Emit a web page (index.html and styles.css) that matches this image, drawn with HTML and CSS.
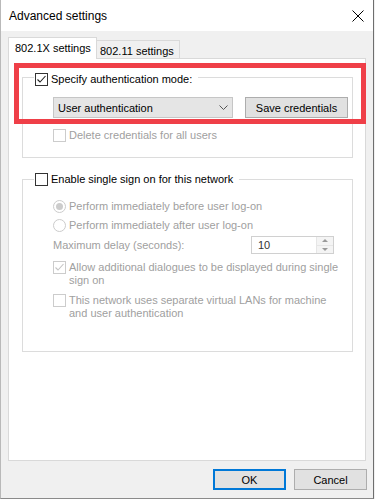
FILE: index.html
```html
<!DOCTYPE html>
<html lang="en">
<head>
    <meta charset="UTF-8">
    <title>Advanced settings</title>
    <link rel="stylesheet" href="styles.css">
</head>
<body>
    <div class="window">
        <div class="titlebar">
            <span class="title">Advanced settings</span>
            <svg class="close" width="12" height="12" viewBox="0 0 12 12">
                <path d="M0.5 0.5 L11.5 11.5 M11.5 0.5 L0.5 11.5" stroke="#000" stroke-width="1" fill="none"/>
            </svg>
        </div>

        <div class="content">
            <div class="tabs">
                <div class="tab active">802.1X settings</div>
                <div class="tab">802.11 settings</div>
            </div>

            <div class="panel">
                <div class="highlight"></div>

                <div class="group group-auth">
                    <label class="group-head">
                        <span class="check on">
                            <svg width="11" height="11" viewBox="0 0 11 11"><path d="M1.5 5.5 L4 8 L9.5 2" stroke="#222" stroke-width="1.1" fill="none"/></svg>
                        </span>
                        Specify authentication mode:
                    </label>
                    <div class="mode-row">
                        <div class="select">
                            <span>User authentication</span>
                            <svg width="9" height="5" viewBox="0 0 9 5"><path d="M0.5 0.5 L4.5 4.5 L8.5 0.5" stroke="#555" stroke-width="1" fill="none"/></svg>
                        </div>
                        <button class="btn save-btn">Save credentials</button>
                    </div>
                    <label class="option disabled delete-row">
                        <span class="check"></span>
                        Delete credentials for all users
                    </label>
                </div>

                <div class="group group-sso">
                    <label class="group-head">
                        <span class="check dark"></span>
                        Enable single sign on for this network
                    </label>
                    <label class="option disabled radio-first">
                        <span class="radio on"></span>
                        Perform immediately before user log-on
                    </label>
                    <label class="option disabled radio-second">
                        <span class="radio"></span>
                        Perform immediately after user log-on
                    </label>
                    <div class="delay-row">
                        <span class="delay-label disabled">Maximum delay (seconds):</span>
                        <div class="spin">
                            <span class="spin-value">10</span>
                            <div class="spin-arrows">
                                <span class="arrow up"></span>
                                <span class="arrow down"></span>
                            </div>
                        </div>
                    </div>
                    <label class="option disabled multi allow-row">
                        <span class="check">
                            <svg width="11" height="11" viewBox="0 0 11 11"><path d="M1.5 5.5 L4 8 L9.5 2" stroke="#c4c4c4" stroke-width="1.1" fill="none"/></svg>
                        </span>
                        <span>Allow additional dialogues to be displayed during single sign on</span>
                    </label>
                    <label class="option disabled multi vlan-row">
                        <span class="check"></span>
                        <span>This network uses separate virtual LANs for machine and user authentication</span>
                    </label>
                </div>
            </div>

            <div class="actions">
                <button class="btn primary">OK</button>
                <button class="btn">Cancel</button>
            </div>
        </div>
    </div>
</body>
</html>
```

FILE: styles.css
```css
* {
    margin: 0;
    padding: 0;
    box-sizing: border-box;
    font-family: 'Liberation Sans', Arial, sans-serif;
}

body {
    background-color: #f0f0f0;
    width: 375px;
    height: 499px;
    overflow: hidden;
    font-size: 11px;
    color: #000;
}

.window {
    width: 374px;
    height: 499px;
    background: #f0f0f0;
    border-left: 1px solid #b9b9b9;
    border-right: 1px solid #6e6e6e;
    border-bottom: 1px solid #8a8a8a;
}

.titlebar {
    height: 31px;
    background: #fff;
    display: flex;
    align-items: center;
    padding-left: 8px;
}

.title {
    font-size: 12px;
}

.close {
    margin-left: auto;
    margin-right: 9px;
}

.content {
    padding: 6px 7px 0 7px;
}

/* tabs */

.tabs {
    display: flex;
    align-items: flex-end;
    height: 21px;
}

.tab {
    height: 18px;
    width: 83px;
    display: flex;
    align-items: center;
    padding: 2px 0 0 3px;
    border: 1px solid #d9d9d9;
    border-bottom: none;
    border-left: none;
    background: #f0f0f0;
}

.tab.active {
    height: 22px;
    width: 89px;
    padding: 0 0 1px 6px;
    border-left: 1px solid #d9d9d9;
    background: #fff;
    margin-bottom: -1px;
    position: relative;
    z-index: 1;
}

.panel {
    position: relative;
    height: 403px;
    background: #fff;
    border: 1px solid #d9d9d9;
    padding: 18px 12px 0 13px;
}

.highlight {
    position: absolute;
    left: 5px;
    top: 4px;
    width: 352px;
    height: 61px;
    border: 5px solid #ef3f48;
    z-index: 2;
}

/* group boxes */

.group {
    border: 1px solid #dcdcdc;
}

.group-head {
    display: flex;
    align-items: center;
    gap: 3px;
    width: fit-content;
    line-height: 13px;
    background: #fff;
    padding: 0 6px 0 1px;
    margin-left: 11px;
}

.group-auth {
    margin-top: 0;
    padding-bottom: 15px;
}

.group-auth .group-head {
    margin-top: -5px;
}

.group-sso {
    margin-top: 21px;
    padding-bottom: 31px;
}

.group-sso .group-head {
    margin-top: -7px;
}

.mode-row {
    display: flex;
    gap: 12px;
    margin: 11px 0 0 30px;
}

.select {
    width: 180px;
    height: 21px;
    display: flex;
    align-items: center;
    justify-content: space-between;
    padding: 0 4px 0 4px;
    background: #e5e5e5;
    border: 1px solid #c6c6c6;
}

.btn {
    height: 21px;
    width: 73px;
    background: #e1e1e1;
    border: 1px solid #adadad;
    font-size: 11px;
    color: #000;
}

.save-btn {
    width: 103px;
}

.btn.primary {
    border: 2px solid #0078d7;
}

/* options */

.option {
    display: flex;
    align-items: center;
    gap: 3px;
    line-height: 13px;
    margin-left: 30px;
}

.option.multi {
    align-items: flex-start;
    padding-right: 11px;
}

.disabled {
    color: #a0a0a0;
}

.delete-row {
    margin-top: 11px;
}

.radio-first {
    margin-top: 14px;
}

.radio-second {
    margin-top: 6px;
}

.allow-row {
    margin-top: 7px;
}

.vlan-row {
    margin-top: 7px;
}

.check {
    width: 13px;
    height: 13px;
    flex-shrink: 0;
    border: 1px solid #cccccc;
    background: #fff;
    display: flex;
    align-items: center;
    justify-content: center;
}

.check.on,
.check.dark {
    border-color: #333;
}

.radio {
    width: 13px;
    height: 13px;
    flex-shrink: 0;
    border: 1px solid #cccccc;
    border-radius: 50%;
    display: flex;
    align-items: center;
    justify-content: center;
}

.radio.on::after {
    content: "";
    width: 7px;
    height: 7px;
    border-radius: 50%;
    background: #cccccc;
}

/* delay spinner */

.delay-row {
    display: flex;
    align-items: center;
    justify-content: space-between;
    margin: 4px 18px 0 30px;
}

.spin {
    width: 83px;
    height: 18px;
    display: flex;
    border: 1px solid #d0d0d0;
}

.spin-value {
    flex: 1;
    padding: 2px 0 0 6px;
    color: #333;
}

.spin-arrows {
    width: 17px;
    display: flex;
    flex-direction: column;
    border-left: 1px solid #e6e6e6;
}

.arrow {
    flex: 1;
    display: flex;
    align-items: center;
    justify-content: center;
    background: #f4f4f4;
}

.arrow.up {
    border-bottom: 1px solid #e6e6e6;
}

.arrow.up::after {
    content: "";
    border-left: 3px solid transparent;
    border-right: 3px solid transparent;
    border-bottom: 3px solid #9a9a9a;
}

.arrow.down::after {
    content: "";
    border-left: 3px solid transparent;
    border-right: 3px solid transparent;
    border-top: 3px solid #9a9a9a;
}

/* footer */

.actions {
    display: flex;
    justify-content: flex-end;
    gap: 8px;
    margin: 8px -1px 0 0;
}
```
